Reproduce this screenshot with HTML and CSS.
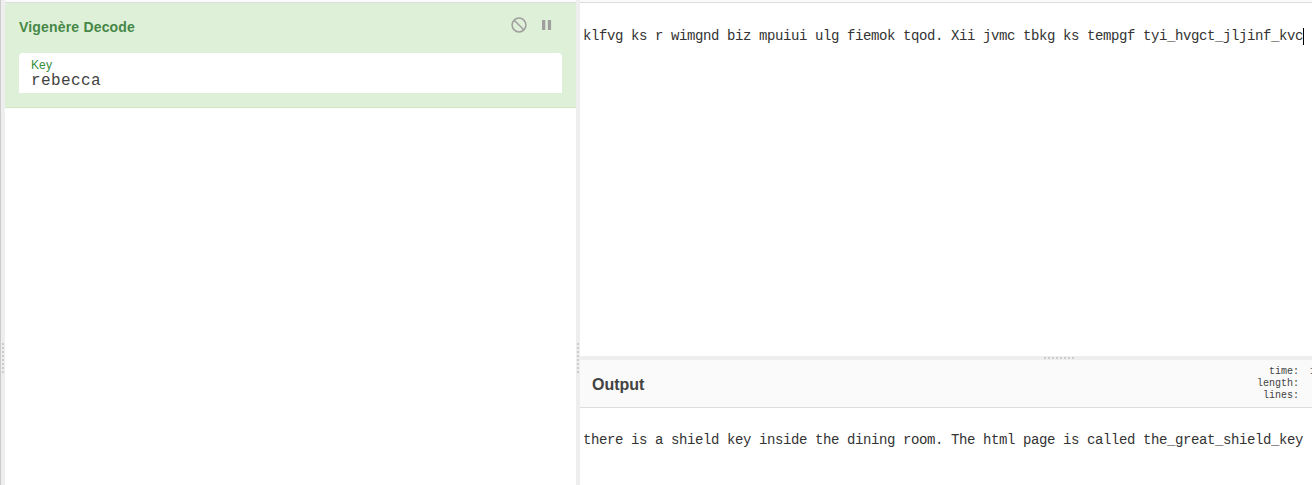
FILE: index.html
```html
<!DOCTYPE html>
<html lang="en">
<head>
<meta charset="utf-8">
<title>Vigenère Decode</title>
<link rel="stylesheet" href="styles.css">
</head>
<body>
<div class="workspace">
  <div class="gutter gutter-first"><span class="dots dots-v"></span></div>
  <section class="recipe">
    <div class="titlebar"></div>
    <div class="operation">
      <div class="op-head">
        <span class="op-title">Vigenère Decode</span>
        <svg class="op-icons" width="44" height="18" viewBox="0 0 44 18">
          <circle cx="9" cy="9" r="6.9" fill="none" stroke="#9f9f9f" stroke-width="1.5"/>
          <path d="M4.2 4.2 13.8 13.8" stroke="#9f9f9f" stroke-width="1.5"/>
          <path d="M32 4h3.3v10H32zM37.8 4h3.3v10h-3.3z" fill="#9f9f9f"/>
        </svg>
      </div>
      <label class="field">
        <span class="field-label">Key</span>
        <span class="field-value">rebecca</span>
      </label>
    </div>
  </section>
  <div class="gutter"><span class="dots dots-v"></span></div>
  <section class="io">
    <div class="input">
      <div class="titlebar"></div>
      <div class="code input-text">klfvg ks r wimgnd biz mpuiui ulg fiemok tqod. Xii jvmc tbkg ks tempgf tyi_hvgct_jljinf_kvc<span class="caret"></span></div>
    </div>
    <div class="gutter-h"><span class="dots dots-h"></span></div>
    <div class="output-head">
      <span class="output-title">Output</span>
      <div class="stats"><div>time:</div><div>length:</div><div>lines:</div></div>
      <div class="stat-values">1</div>
    </div>
    <div class="code output-text">there is a shield key inside the dining room. The html page is called the_great_shield_key</div>
  </section>
</div>
</body>
</html>
```
FILE: styles.css
```css
* { box-sizing: border-box; }
body {
  margin: 0;
  background: #fff;
  color: #333;
  font-family: "Liberation Sans", Arial, sans-serif;
  overflow: hidden;
}
.workspace { display: flex; width: 1312px; height: 485px; overflow: hidden; }
.gutter {
  display: flex;
  flex: none;
  width: 4px;
  padding: 343px 0 0 1px;
  background: #eee;
}
.gutter-first { width: 5px; border-left: 1px solid #ccc; }
.dots-v {
  width: 2px;
  height: 30px;
  background: repeating-linear-gradient(to bottom, #ccc 0 2px, transparent 2px 4px);
}
.dots-h {
  width: 30px;
  height: 2px;
  background: repeating-linear-gradient(to right, #ccc 0 2px, transparent 2px 4px);
}
.recipe { flex: none; width: 571px; }
.titlebar { height: 3px; background: #fafafa; border-bottom: 1px solid #ddd; }
.operation {
  height: 105px;
  padding: 13px 14px 0;
  background: #dff0d8;
  border-bottom: 1px solid #d0e6c4;
}
.op-head { display: flex; justify-content: space-between; height: 37px; }
.op-title {
  padding-top: 2px;
  color: #468847;
  font-size: 14px;
  font-weight: bold;
  line-height: 18px;
  letter-spacing: 0.18px;
}
.op-icons { flex: none; margin-right: 8px; }
.field {
  display: flex;
  flex-direction: column;
  height: 40px;
  padding: 5px 12px 0;
  background: #fff;
  border-radius: 4px 4px 0 0;
}
.field-label { color: #388e3c; font-size: 12px; line-height: 14px; letter-spacing: 0.1px; }
.field-value {
  color: #424242;
  font: 16px/18px "Liberation Mono", monospace;
  letter-spacing: 0.4px;
}
.io { flex: 1; min-width: 0; }
.input { height: 356px; }
.code {
  display: flex;
  padding-left: 3px;
  white-space: pre;
  color: #333;
  font: 14px/18px "Liberation Mono", monospace;
  letter-spacing: -0.4px;
}
.input-text { padding-top: 24px; }
.caret { flex: none; width: 1px; height: 17px; margin-top: 1px; background: #000; }
.gutter-h {
  display: flex;
  justify-content: center;
  height: 4px;
  padding: 1px 0 0 226px;
  background: #eee;
}
.output-head {
  display: flex;
  height: 48px;
  padding: 6px 0 0 12px;
  background: #fafafa;
  border-bottom: 1px solid #ddd;
  overflow: hidden;
}
.output-title { flex: 1; color: #424242; font-size: 16px; font-weight: bold; line-height: 38px; }
.stats, .stat-values {
  color: #424242;
  font: 10px/12px "Liberation Mono", monospace;
  text-align: right;
}
.stat-values { width: 2px; margin-left: 11px; text-align: left; }
.output-text { padding-top: 23px; }
```
